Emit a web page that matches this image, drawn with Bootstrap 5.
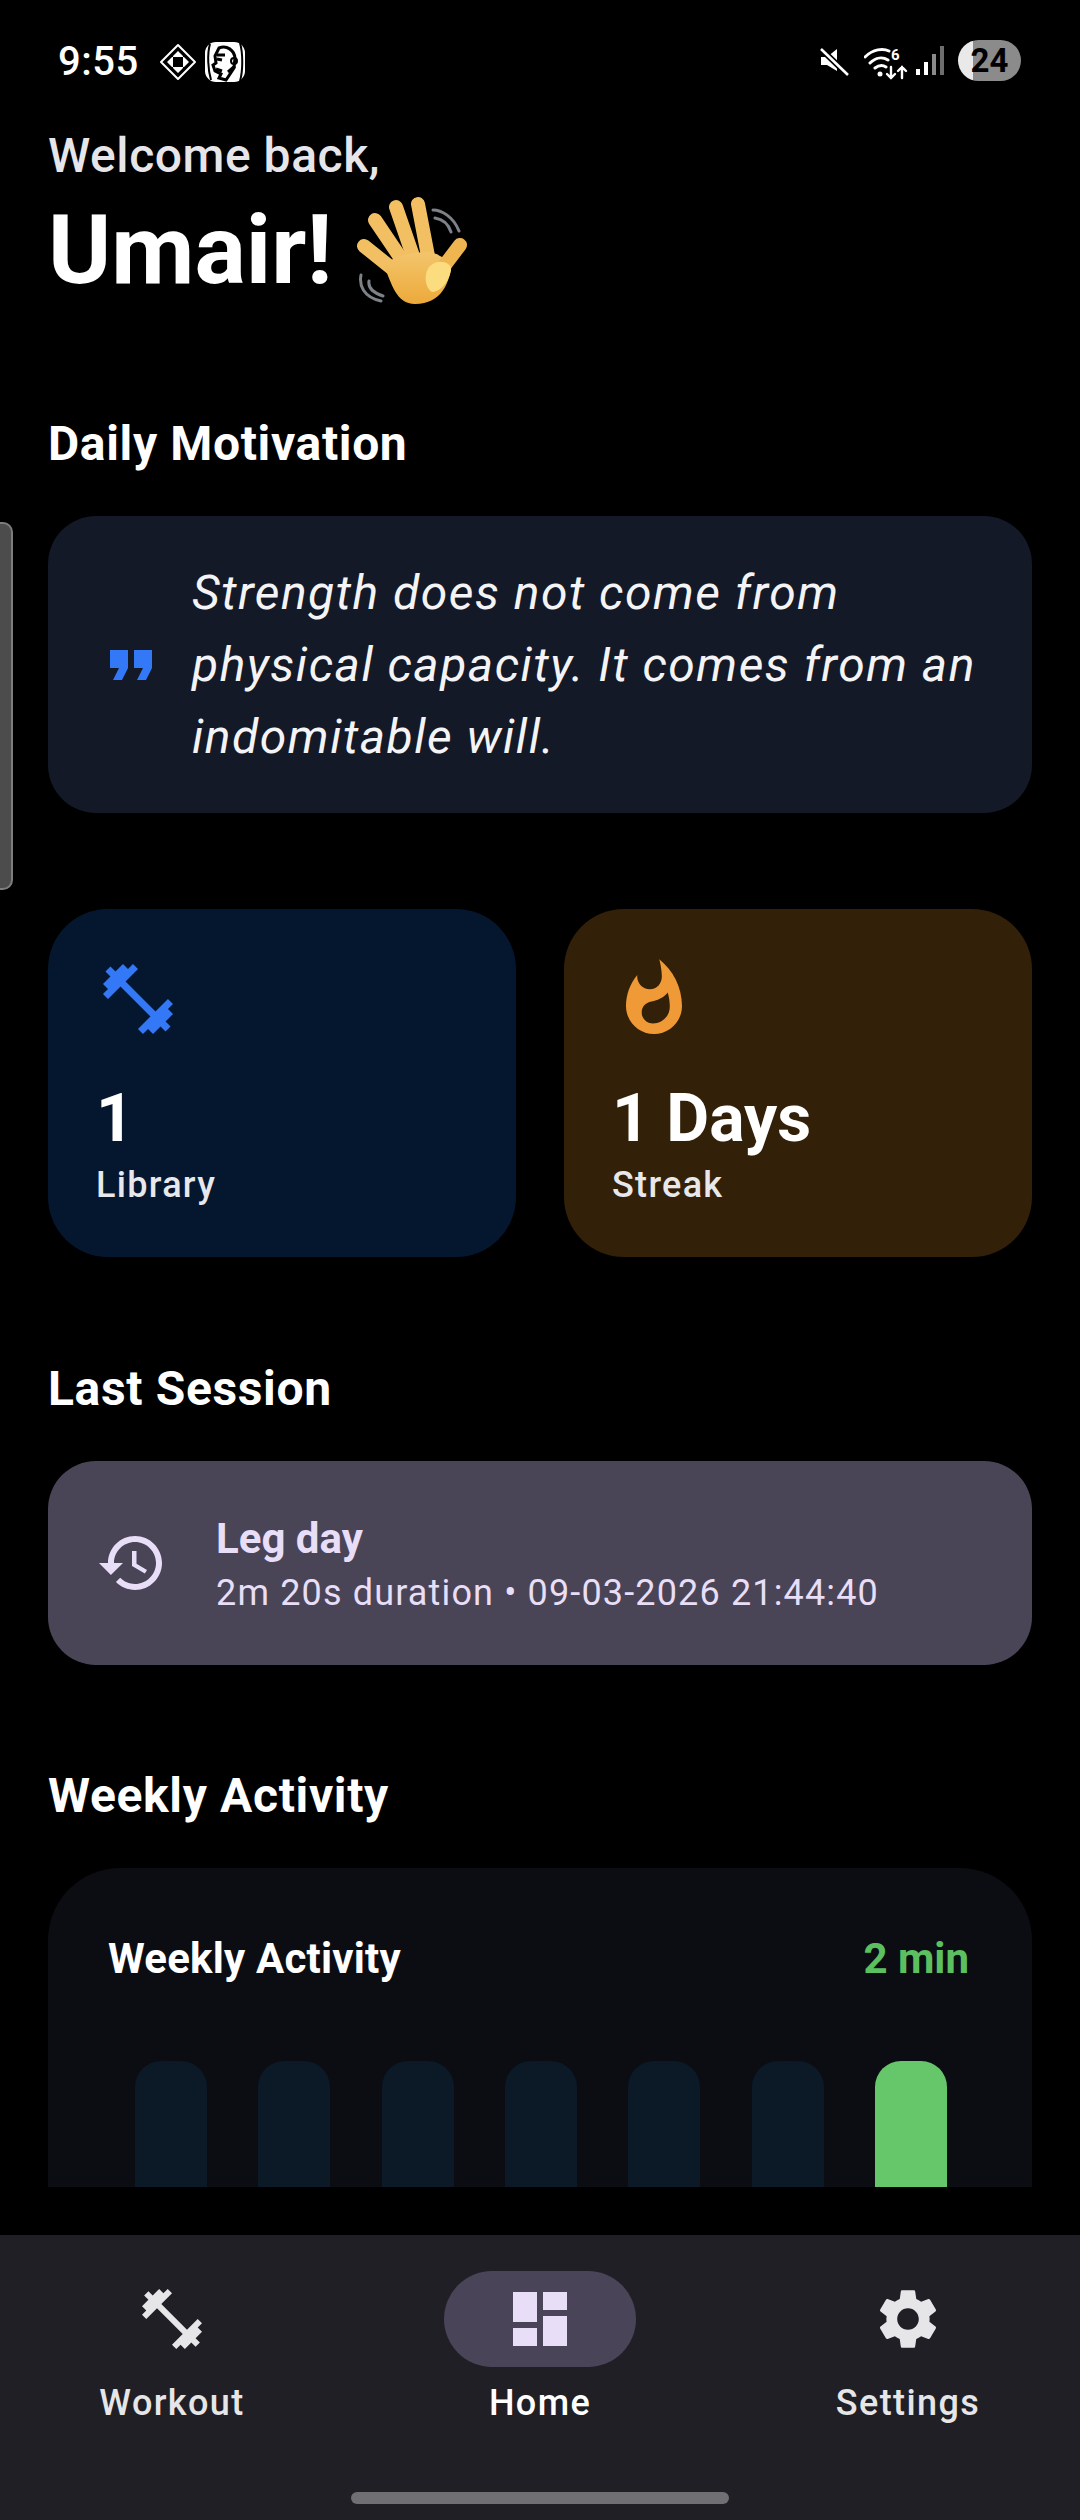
<!doctype html>
<html lang="en"><head><meta charset="utf-8"><title>Home</title>
<link href="https://cdn.jsdelivr.net/npm/bootstrap@5.3.0/dist/css/bootstrap.min.css" rel="stylesheet">
<style>
html,body{margin:0;background:#000;}
body{width:1080px;height:2520px;overflow:hidden;font-family:Roboto,"Liberation Sans",sans-serif;color:#fff;position:relative;}
.app-frame{height:2520px;}
.status-strip{height:124px;padding:38px 59px 0 58px;}
.clock{font-size:40px;line-height:48px;font-weight:500;letter-spacing:.5px;}
.batt{width:63px;height:41px;border-radius:21px;background:linear-gradient(90deg,#e9e9e9 0 15px,#8b8b8b 15px);color:#000;font-size:33px;font-weight:700;line-height:41px;text-align:center;}
.scroll-area{height:2063px;overflow:hidden;padding:0 48px;}
.hello{font-size:48px;line-height:64px;color:#e6e6ea;font-weight:500;letter-spacing:.55px;}
.who{font-size:96px;line-height:112px;font-weight:700;}
.sect{font-size:48px;line-height:60px;font-weight:700;letter-spacing:.65px;}
.quote-box{margin-top:42px;height:297px;background:#141927;border-radius:48px;padding:0 42px 0 47px;}
.quote-txt{font-size:48px;line-height:72px;font-style:italic;letter-spacing:1.5px;color:#f4f4f6;}
.stat-box{height:348px;width:468px;border-radius:60px;padding:48px;}
.stat-blue{background:#05172e;}
.stat-amber{background:#332008;}
.stat-num{font-size:66px;line-height:78px;font-weight:700;margin-top:39px;}
.stat-lbl{font-size:36px;line-height:48px;font-weight:500;letter-spacing:1.3px;color:#e8e8ec;margin-top:3px;}
.sess-box{margin-top:42px;height:204px;background:#4a4556;border-radius:48px;padding:0 48px;color:#e8def8;}
.sess-text{margin-left:48px;padding-top:3px;}
.sess-name{font-size:42px;line-height:52px;font-weight:700;}
.sess-sub{font-size:36px;line-height:48px;letter-spacing:1.15px;margin-top:4px;}
.chart-box{margin-top:42px;height:520px;background:#0b0d12;border-radius:72px;padding:65px 60px 0;}
.chart-h{font-size:42px;line-height:52px;font-weight:700;letter-spacing:.2px;}
.chart-v{font-size:42px;line-height:52px;font-weight:700;color:#5cc061;}
.bars{padding:0 25px 0 27px;margin-top:76px;}
.bar-slot{width:72px;height:300px;border-radius:26px 26px 0 0;background:#0c1927;}
.bar-on{background:#66c66a;}
.bottom-nav{height:285px;margin-top:48px;background:#211f26;padding-top:36px;}
.nav-cols{display:grid;grid-template-columns:repeat(3,368px);justify-content:center;}
.nav-pill{width:192px;height:96px;border-radius:48px;}
.nav-pill-on{background:#4a4458;}
.nav-lbl{font-size:36px;line-height:48px;font-weight:500;letter-spacing:1.4px;color:#e6e6e8;margin-top:12px;}
.nav-lbl-on{color:#fff;}
.gesture{width:378px;height:12px;border-radius:6px;background:#706f74;margin:65px auto 0;}
.edge-tab{position:absolute;left:-4px;top:522px;width:17px;height:368px;background:#4c4c4c;border:2px solid #7d7d7d;border-radius:0 10px 10px 0;}
svg{display:block;flex:none;}
</style></head><body>
<div class="app-frame">
  <div class="status-strip d-flex align-items-start">
    <span class="clock">9:55</span>
    <svg width="38" height="38" viewBox="0 0 38 38" style="margin:5px 0 0 20px"><path d="M19 2 36 19 19 36 2 19Z" fill="none" stroke="#fff" stroke-width="2" stroke-linejoin="round"/><path d="M19 8 25 14 19 14ZM19 8 13 14 19 14Z M8 19 14 13 14 19ZM30 19 24 13 24 19ZM19 30 13 24 19 24ZM19 30 25 24 19 24ZM8 19 14 25 14 19ZM30 19 24 25 24 19Z" fill="#fff"/></svg>
    <svg width="40" height="40" viewBox="0 0 40 40" style="margin:4px 0 0 8px"><rect width="40" height="40" rx="11" fill="#fff"/><path d="M5 2C2 12 3 28 6 38M35 1c3 10 3 28 0 38" stroke="#000" stroke-width="2" fill="none"/><path d="M14 6c8-3 15 2 16 10l-1 10-8 12-7-2 2-4-6-3-2-6 3-2-1-7z" fill="#fff" stroke="#000" stroke-width="3"/><path d="M12 13h8M12 17l5 1M11 27l6 2M23 30l7-6" stroke="#000" stroke-width="3"/><circle cx="29" cy="19" r="3" fill="none" stroke="#000" stroke-width="2"/></svg>
    <div class="ms-auto d-flex align-items-start" style="margin-top:2px">
      <svg width="30" height="30" viewBox="0 0 30 30" style="margin-top:7px"><path d="M2 10h6l10-8v22L8 18H2z" fill="#fff"/><path d="M2 2 29 28" stroke="#000" stroke-width="6"/><path d="M2 2 29 28" stroke="#fff" stroke-width="2.6"/></svg>
      <svg width="44" height="36" viewBox="0 0 44 36" style="margin:6px 0 0 15px"><g fill="none" stroke="#fff" stroke-width="3" stroke-linecap="round"><path d="M1 11C9 3 19 2 25 5M6 17c6-6 13-6 18-3M11 22c4-3 8-3 11-1"/><path d="M27 21v11m-4-4 4 4 4-4M38 32V21m-4 4 4-4 4 4" stroke-width="2.4"/></g><circle cx="16" cy="28" r="2.5" fill="#fff"/><text x="27" y="14" font-size="15" font-weight="700" fill="#fff" font-family="Roboto,sans-serif">6</text></svg>
      <svg width="28" height="30" viewBox="0 0 28 30" style="margin:6px 0 0 8px"><rect x="0" y="23" width="4" height="6" fill="#fff"/><rect x="8" y="16" width="4" height="13" fill="#fff"/><rect x="16" y="8" width="4" height="21" fill="#8a8a8a"/><rect x="24" y="0" width="4" height="29" fill="#6e6e6e"/></svg>
      <div class="batt" style="margin-left:14px">24</div>
    </div>
  </div>
  <div class="scroll-area">
    <div class="hello">Welcome back,</div>
    <div class="d-flex align-items-start" style="height:120px;margin-top:6px">
      <span class="who">Umair!</span>
      <svg width="128" height="115" viewBox="340 195 128 115" style="margin:1px 0 0 8px">
        <defs><linearGradient id="hand" x1="0" y1="0" x2="0" y2="1"><stop offset="0" stop-color="#f3c56c"/><stop offset="1" stop-color="#eda93a"/></linearGradient></defs>
        <g fill="none" stroke="#7d8188" stroke-width="3" stroke-linecap="round"><path d="M433 210c8 0 20 6 26 21M435 218c7 1 13 5 16 14M361 275c-2 10 2 22 20 26M369 281c-1 6 2 11 14 15"/></g>
        <g fill="none" stroke="#f2c062" stroke-linecap="round" stroke-width="14"><path d="M364 246 394 270"/><path d="M375 220 402 260"/><path d="M396 207 413 256"/><path d="M418 204 428 256"/></g>
        <path d="M384 266C392 254 430 248 440 256L452 262C450 282 442 304 415 304 396 304 392 284 384 266Z" fill="url(#hand)"/>
        <path d="M460 245 438 274" stroke="#efb551" stroke-width="14" stroke-linecap="round" fill="none"/>
        <path d="M430 266C438 258 452 262 451 270 449 282 440 292 432 292 425 288 423 274 430 266Z" fill="#fbdc7e"/>
      </svg>
    </div>
    <div class="sect" style="margin-top:100px">Daily Motivation</div>
    <div class="quote-box d-flex align-items-center">
      <svg width="72" height="72" viewBox="0 0 24 24" fill="#3378f6"><path d="M6 17h3l2-4V7H5v6h3zm8 0h3l2-4V7h-6v6h3z"/></svg>
      <div class="quote-txt" style="margin-left:25px">Strength does not come from physical capacity. It comes from an indomitable will.</div>
    </div>
    <div class="d-flex justify-content-between" style="margin-top:96px">
      <div class="stat-box stat-blue">
        <svg width="84" height="84" viewBox="0 0 24 24" fill="#3378f6"><path d="M20.57 14.86L22 13.43 20.57 12 17 15.57 8.43 7 12 3.43 10.57 2 9.14 3.43 7.71 2 5.57 4.14 4.14 2.71 2.71 4.14l1.43 1.43L2 7.71l1.43 1.43L2 10.57 3.43 12 7 8.43 15.57 17 12 20.57 13.43 22l1.43-1.43L16.29 22l2.14-2.14 1.43 1.43 1.43-1.43-1.43-1.43L22 16.29z"/></svg>
        <div class="stat-num">1</div><div class="stat-lbl">Library</div>
      </div>
      <div class="stat-box stat-amber">
        <svg width="84" height="84" viewBox="0 0 24 24" fill="#f09a37"><path d="M13.5.67s.74 2.65.74 4.8c0 2.06-1.35 3.73-3.41 3.73-2.07 0-3.63-1.67-3.63-3.73l.03-.36C5.21 7.51 4 10.62 4 14c0 4.42 3.58 8 8 8s8-3.58 8-8C20 8.61 17.41 3.8 13.5.67zM11.71 19c-1.78 0-3.22-1.4-3.22-3.14 0-1.62 1.05-2.76 2.81-3.12 1.77-.36 3.6-1.21 4.62-2.58.39 1.29.59 2.65.59 4.04 0 2.65-2.15 4.8-4.8 4.8z"/></svg>
        <div class="stat-num">1 Days</div><div class="stat-lbl">Streak</div>
      </div>
    </div>
    <div class="sect" style="margin-top:102px">Last Session</div>
    <div class="sess-box d-flex align-items-center">
      <svg width="72" height="72" viewBox="0 0 24 24" fill="#e8def8"><path d="M13 3c-4.97 0-9 4.03-9 9H1l3.89 3.89.07.14L9 12H6c0-3.87 3.13-7 7-7s7 3.13 7 7-3.13 7-7 7c-1.93 0-3.68-.79-4.94-2.06l-1.42 1.42C8.27 19.99 10.51 21 13 21c4.97 0 9-4.03 9-9s-4.03-9-9-9zm-1 5v5l4.28 2.54.72-1.21-3.5-2.08V8H12z"/></svg>
      <div class="sess-text"><div class="sess-name">Leg day</div><div class="sess-sub">2m 20s duration • 09-03-2026 21:44:40</div></div>
    </div>
    <div class="sect" style="margin-top:101px">Weekly Activity</div>
    <div class="chart-box">
      <div class="d-flex justify-content-between"><span class="chart-h">Weekly Activity</span><span class="chart-v" style="margin-right:3px">2 min</span></div>
      <div class="bars d-flex justify-content-between">
        <div class="bar-slot"></div><div class="bar-slot"></div><div class="bar-slot"></div><div class="bar-slot"></div><div class="bar-slot"></div><div class="bar-slot"></div><div class="bar-slot bar-on"></div>
      </div>
    </div>
  </div>
  <nav class="bottom-nav">
    <div class="nav-cols">
      <div class="d-flex flex-column align-items-center">
        <div class="nav-pill d-flex align-items-center justify-content-center"><svg width="72" height="72" viewBox="0 0 24 24" fill="#e6e6e8"><path d="M20.57 14.86L22 13.43 20.57 12 17 15.57 8.43 7 12 3.43 10.57 2 9.14 3.43 7.71 2 5.57 4.14 4.14 2.71 2.71 4.14l1.43 1.43L2 7.71l1.43 1.43L2 10.57 3.43 12 7 8.43 15.57 17 12 20.57 13.43 22l1.43-1.43L16.29 22l2.14-2.14 1.43 1.43 1.43-1.43-1.43-1.43L22 16.29z"/></svg></div>
        <div class="nav-lbl">Workout</div>
      </div>
      <div class="d-flex flex-column align-items-center">
        <div class="nav-pill nav-pill-on d-flex align-items-center justify-content-center"><svg width="72" height="72" viewBox="0 0 24 24" fill="#e8def8"><path d="M3 13h8V3H3v10zm0 8h8v-6H3v6zm10 0h8V11h-8v10zm0-18v6h8V3h-8z"/></svg></div>
        <div class="nav-lbl nav-lbl-on">Home</div>
      </div>
      <div class="d-flex flex-column align-items-center">
        <div class="nav-pill d-flex align-items-center justify-content-center"><svg width="72" height="72" viewBox="0 0 24 24" fill="#e6e6e8"><path d="M19.14 12.94c.04-.3.06-.61.06-.94 0-.32-.02-.64-.07-.94l2.03-1.58c.18-.14.23-.41.12-.61l-1.92-3.32c-.12-.22-.37-.29-.59-.22l-2.39.96c-.5-.38-1.03-.7-1.62-.94l-.36-2.54c-.04-.24-.24-.41-.48-.41h-3.84c-.24 0-.43.17-.47.41l-.36 2.54c-.59.24-1.13.57-1.62.94l-2.39-.96c-.22-.08-.47 0-.59.22L2.74 8.87c-.12.21-.08.47.12.61l2.03 1.58c-.05.3-.09.63-.09.94s.02.64.07.94l-2.03 1.58c-.18.14-.23.41-.12.61l1.92 3.32c.12.22.37.29.59.22l2.39-.96c.5.38 1.03.7 1.62.94l.36 2.54c.05.24.24.41.48.41h3.84c.24 0 .44-.17.47-.41l.36-2.54c.59-.24 1.13-.56 1.62-.94l2.39.96c.22.08.47 0 .59-.22l1.92-3.32c.12-.22.07-.47-.12-.61l-2.01-1.58zM12 15.6c-1.98 0-3.6-1.62-3.6-3.6s1.62-3.6 3.6-3.6 3.6 1.62 3.6 3.6-1.62 3.6-3.6 3.6z"/></svg></div>
        <div class="nav-lbl">Settings</div>
      </div>
    </div>
    <div class="gesture"></div>
  </nav>
  <div class="edge-tab"></div>
</div>
<script src="https://cdn.jsdelivr.net/npm/bootstrap@5.3.0/dist/js/bootstrap.bundle.min.js"></script>
</body></html>
